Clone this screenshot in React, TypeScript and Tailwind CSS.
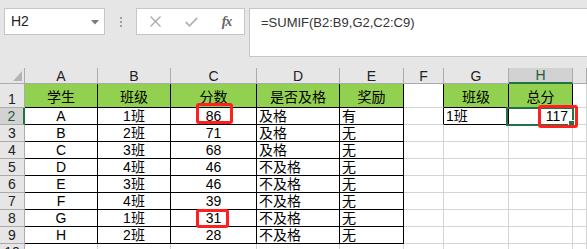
import React from "react";

const COLS = ["A", "B", "C", "D", "E", "F", "G", "H", ""];

const DATA: string[][] = [
  ["学生", "班级", "分数", "是否及格", "奖励"],
  ["A", "1班", "86", "及格", "有"],
  ["B", "2班", "71", "及格", "无"],
  ["C", "3班", "68", "及格", "无"],
  ["D", "4班", "46", "不及格", "无"],
  ["E", "3班", "46", "不及格", "无"],
  ["F", "4班", "39", "不及格", "无"],
  ["G", "1班", "31", "不及格", "无"],
  ["H", "2班", "28", "不及格", "无"],
];

const FONT = "font-['Liberation_Sans','Noto_Sans_CJK_SC',sans-serif]";

function Cell({ r, c }: { r: number; c: number }) {
  // r: 1..10, c: 0..8 (A..I)
  let text = "";
  let align = "justify-center";
  const inTable = r <= 9 && c <= 4;
  const inSummary = r <= 2 && (c === 6 || c === 7);
  if (inTable) {
    text = DATA[r - 1][c];
    if (r > 1 && c >= 3) align = "justify-start pl-[2px]";
  }
  if (inSummary) {
    if (r === 1) text = c === 6 ? "班级" : "总分";
    else {
      text = c === 6 ? "1班" : "117";
      align = c === 6 ? "justify-start pl-[2px]" : "justify-end pr-[4px]";
    }
  }
  const green = r === 1 && (c <= 4 || c === 6 || c === 7);
  let border = "border-r border-b border-[#d4d4d4]";
  if (inTable || inSummary) border = "border-r border-b border-black";
  else if (c === 5 && r <= 2) border = "border-r border-b border-r-black border-b-[#d4d4d4]";
  const bg = green ? "bg-[#92d050]" : "bg-white";
  const items = r === 1 ? "items-center pt-[2px]" : "items-center";
  return (
    <div className={`flex ${items} ${align} ${border} ${bg} overflow-hidden whitespace-nowrap text-[14px] leading-[16px] text-black`}>
      {text}
    </div>
  );
}

export default function App() {
  const rows = [1, 2, 3, 4, 5, 6, 7, 8, 9, 10];
  return (
    <div className={`relative w-[587px] h-[249px] overflow-hidden bg-[#e6e6e6] ${FONT}`}>
      {/* Formula bar area */}
      <div className="flex items-start h-[68px] pt-[8px] pl-[4px]">
        <div className="relative flex items-center w-[101px] h-[27px] bg-white border border-[#c6c6c6] pl-[6px] text-[14px] text-[#222]">
          H2
          <svg className="absolute right-[5px] top-[11px]" width="8" height="5" viewBox="0 0 8 5">
            <path d="M0 0 L8 0 L4 4.5 Z" fill="#7a7a7a" />
          </svg>
        </div>
        <div className="flex flex-col items-center justify-center gap-[2px] w-[31px] h-[27px]">
          <div className="w-[2px] h-[2px] bg-[#a0a0a0]" />
          <div className="w-[2px] h-[2px] bg-[#a0a0a0]" />
          <div className="w-[2px] h-[2px] bg-[#a0a0a0]" />
        </div>
        <div className="flex items-center w-[109px] h-[27px] bg-white border border-[#c6c6c6]">
          <div className="flex items-center justify-center w-[36px]">
            <svg width="11" height="11" viewBox="0 0 11 11">
              <path d="M0.5 0.5 L10.5 10.5 M10.5 0.5 L0.5 10.5" stroke="#a9a9a9" strokeWidth="1.3" fill="none" />
            </svg>
          </div>
          <div className="flex items-center justify-center w-[36px]">
            <svg width="13" height="10" viewBox="0 0 13 10">
              <path d="M0.8 5 L4.5 8.8 L12.2 0.8" stroke="#b4b4b4" strokeWidth="1.8" fill="none" />
            </svg>
          </div>
          <div className="flex items-center justify-center w-[35px] font-['Liberation_Serif',serif] italic font-bold text-[14px] text-[#666] tracking-[-1px]">
            fx
          </div>
        </div>
        <div className="ml-[4px] flex-1 h-[49px] bg-white border border-r-0 border-[#c6c6c6] pl-[11px] pt-[5px] text-[13px] leading-[18px] text-[#333]">
          =SUMIF(B2:B9,G2,C2:C9)
        </div>
      </div>

      {/* Grid */}
      <div className="grid grid-cols-[25px_73px_73px_86px_83px_64px_40px_65px_64px_14px] grid-rows-[16px_24px_repeat(9,17px)]">
        {/* corner */}
        <div className="relative border-r border-b border-[#ababab] bg-[#e6e6e6]">
          <svg className="absolute left-[13px] top-[3px]" width="9" height="10" viewBox="0 0 9 10">
            <path d="M9 0 L9 10 L0 10 Z" fill="#b4b4b4" />
          </svg>
        </div>
        {COLS.map((c, i) =>
          c === "H" ? (
            <div key={i} className="flex items-center justify-center bg-[#d2d2d2] border-r border-[#ababab] border-b-2 border-b-[#217346] text-[14px] leading-[14px] text-[#1e5c38]">
              {c}
            </div>
          ) : (
            <div key={i} className="flex items-center justify-center bg-[#e6e6e6] border-r border-b border-[#ababab] text-[14px] leading-[14px] text-[#222]">
              {c}
            </div>
          )
        )}
        {rows.map((r) => (
          <React.Fragment key={r}>
            {r === 2 ? (
              <div className="flex items-end justify-center bg-[#d2d2d2] border-r-2 border-r-[#217346] border-b border-b-[#ababab] text-[14px] leading-[16px] text-[#1e5c38]">
                {r}
              </div>
            ) : (
              <div className={`flex ${r === 1 ? "items-end" : "items-center"} justify-center bg-[#e6e6e6] border-r border-b border-[#ababab] text-[14px] leading-[16px] text-[#222]`}>
                {r}
              </div>
            )}
            {[0, 1, 2, 3, 4, 5, 6, 7, 8].map((c) => (
              <Cell key={c} r={r} c={c} />
            ))}
          </React.Fragment>
        ))}
      </div>

      {/* Selection of H2 */}
      <div className="absolute left-[506px] top-[107px] w-[68px] h-[19px] border-2 border-[#217346]" />
      <div className="absolute left-[568px] top-[120px] w-[7px] h-[7px] bg-[#217346] border border-white" />

      {/* Red annotation boxes */}
      <div className="absolute left-[196px] top-[103px] w-[37px] h-[21px] border-[3px] border-[#ff1f1f] rounded-[3px]" />
      <div className="absolute left-[196px] top-[209px] w-[33px] h-[19px] border-[3px] border-[#ff1f1f] rounded-[3px]" />
      <div className="absolute left-[538px] top-[105px] w-[40px] h-[23px] border-[3px] border-[#ff1f1f] rounded-[3px]" />
    </div>
  );
}
